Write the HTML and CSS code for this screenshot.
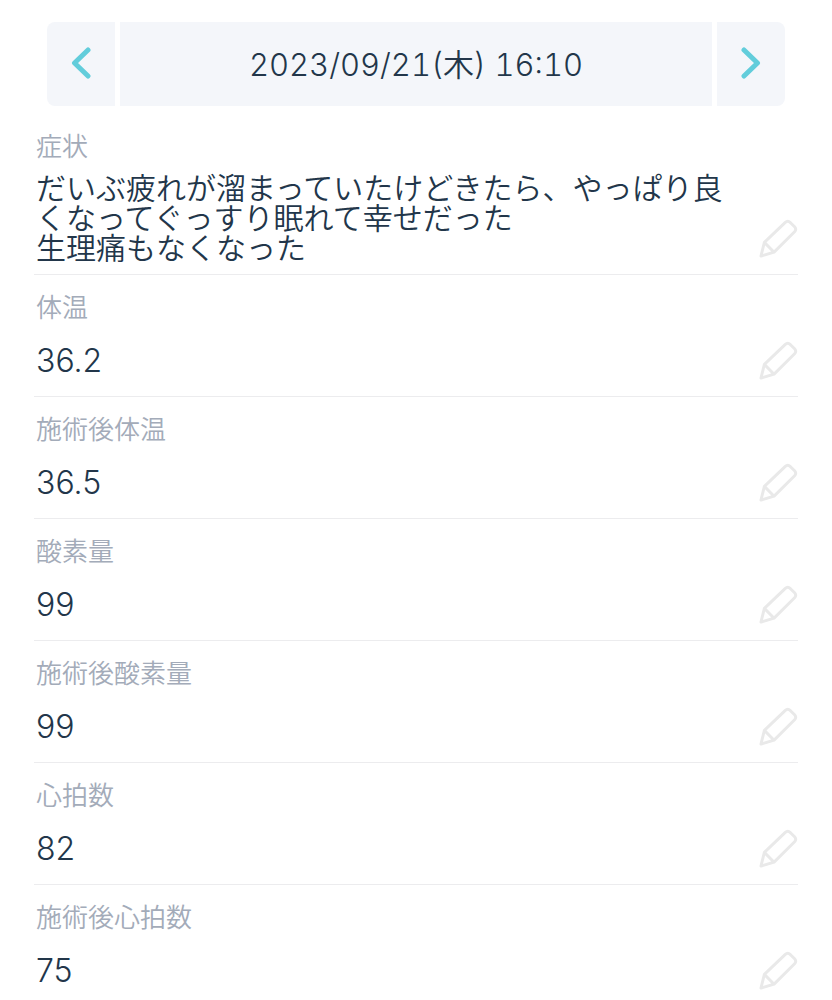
FILE: index.html
```html
<!DOCTYPE html>
<html lang="ja">
<head>
  <meta charset="UTF-8">
  <meta name="viewport" content="width=device-width, initial-scale=1">
  <title>施術記録</title>
  <link rel="stylesheet" href="styles.css">
</head>
<body>

  <!-- Pencil icon, used by every record -->
  <svg class="sprite" aria-hidden="true">
    <symbol id="pencil" viewBox="0 0 40 40">
      <path d="M2 38 L5.500 24 L27 3.500 Q29.500 1.200 32 3.500 L36.500 8 Q38.800 10.500 36.500 13 L15.500 34 Z M6 24.500 L15 33.500"/>
    </symbol>
  </svg>

  <div class="container">
    <!-- Date -->
    <nav class="date-nav">
      <button type="button" class="date-button prev" aria-label="前へ">
        <svg class="arrow" viewBox="0 0 20 32"><path d="M17 3 L3.500 16 L17 29"/></svg>
      </button>
      <div class="date">2023/09/21(木) 16:10</div>
      <button type="button" class="date-button next" aria-label="次へ">
        <svg class="arrow" viewBox="0 0 20 32"><path d="M3 3 L16.500 16 L3 29"/></svg>
      </button>
    </nav>

    <!-- Records -->
    <dl class="records">
      <div class="record">
        <dt>症状</dt>
        <dd>
          <span class="note">だいぶ疲れが溜まっていたけどきたら、やっぱり良くなってぐっすり眠れて幸せだった<br>生理痛もなくなった</span>
          <button type="button" class="edit" aria-label="症状を編集"><svg><use href="#pencil"/></svg></button>
        </dd>
      </div>
      <div class="record">
        <dt>体温</dt>
        <dd>
          <span class="value">36.2</span>
          <button type="button" class="edit" aria-label="体温を編集"><svg><use href="#pencil"/></svg></button>
        </dd>
      </div>
      <div class="record">
        <dt>施術後体温</dt>
        <dd>
          <span class="value">36.5</span>
          <button type="button" class="edit" aria-label="施術後体温を編集"><svg><use href="#pencil"/></svg></button>
        </dd>
      </div>
      <div class="record">
        <dt>酸素量</dt>
        <dd>
          <span class="value">99</span>
          <button type="button" class="edit" aria-label="酸素量を編集"><svg><use href="#pencil"/></svg></button>
        </dd>
      </div>
      <div class="record">
        <dt>施術後酸素量</dt>
        <dd>
          <span class="value">99</span>
          <button type="button" class="edit" aria-label="施術後酸素量を編集"><svg><use href="#pencil"/></svg></button>
        </dd>
      </div>
      <div class="record">
        <dt>心拍数</dt>
        <dd>
          <span class="value">82</span>
          <button type="button" class="edit" aria-label="心拍数を編集"><svg><use href="#pencil"/></svg></button>
        </dd>
      </div>
      <div class="record">
        <dt>施術後心拍数</dt>
        <dd>
          <span class="value">75</span>
          <button type="button" class="edit" aria-label="施術後心拍数を編集"><svg><use href="#pencil"/></svg></button>
        </dd>
      </div>
    </dl>
  </div>

</body>
</html>
```

FILE: styles.css
```css
body {
  margin: 0;
  background-color: #fff;
  color: #22364a;
  font-family: Inter, 'Noto Sans CJK JP', sans-serif;
}
button {
  border: none;
  padding: 0;
  cursor: pointer;
}
.sprite {
  display: none;
}
.container {
  padding: 22px 34px 0;
}
.date-nav {
  display: flex;
  gap: 5px;
  margin: 0 13px;
}
.date-button, .date {
  display: flex;
  align-items: center;
  justify-content: center;
  box-sizing: border-box;
  height: 84px;
  background-color: #f4f6fa;
}
.date-button {
  width: 68px;
  padding-bottom: 2px;
}
.date {
  flex: 1;
  padding-bottom: 4px;
  font-size: 31px;
  font-weight: 350;
  font-variant-numeric: tabular-nums;
}
.prev {
  border-radius: 8px 0 0 8px;
}
.next {
  border-radius: 0 8px 8px 0;
}
.arrow {
  width: 20px;
  height: 32px;
  fill: none;
  stroke: #62cddb;
  stroke-width: 5;
  stroke-linecap: round;
  stroke-linejoin: round;
}
.records {
  margin: 8px 0 0;
}
.record {
  padding: 20px 0 8px 2px;
  border-bottom: 1px solid #ececee;
}
dt {
  color: #a3abb9;
  font-size: 26px;
  font-weight: 350;
  line-height: 26px;
}
dd {
  display: flex;
  align-items: flex-end;
  justify-content: space-between;
  margin: 0;
}
.value {
  padding: 18px 0 6px;
  font-size: 32px;
  font-weight: 350;
  line-height: 43px;
}
.note {
  max-width: 690px;
  padding: 13px 0 3px;
  font-size: 30px;
  font-weight: 350;
  line-height: 30px;
}
.edit {
  flex: none;
  background: none;
  margin-bottom: 8px;
}
.edit svg {
  display: block;
  width: 39px;
  height: 39px;
  fill: none;
  stroke: #e9e9e9;
  stroke-width: 3;
  stroke-linejoin: round;
}
```
